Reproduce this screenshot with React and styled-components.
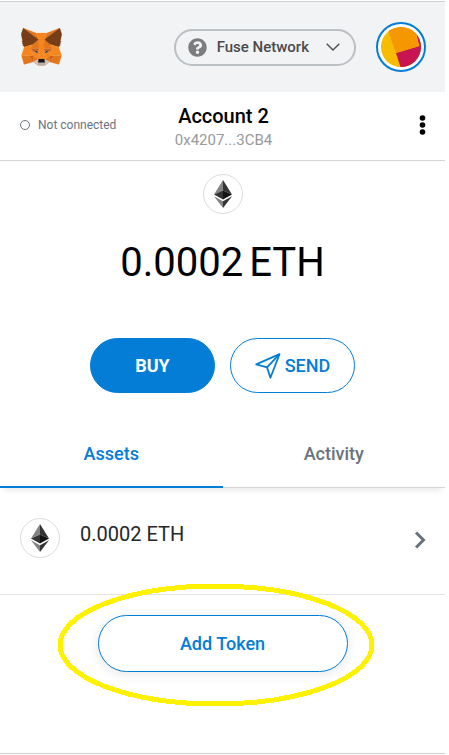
import React from "react";
import styled, { createGlobalStyle, css } from "styled-components";

const GlobalStyle = createGlobalStyle`
  *, *::before, *::after { box-sizing: border-box; }
  body { margin: 0; background: #fff; font-family: Roboto, "Liberation Sans", sans-serif; color: #000; }
  button { font-family: inherit; margin: 0; padding: 0; border: 0; background: none; cursor: pointer; }
  h1, p, ul { margin: 0; padding: 0; }
  svg { display: block; flex: none; }
`;

const Popup = styled.div`
  display: flex;
  flex-direction: column;
  min-height: calc(100vh - 1px);
  margin-right: 4px;
  border-bottom: 1px solid #cdcdcd;
`;

const Header = styled.header`
  display: flex;
  align-items: center;
  gap: 20px;
  padding: 20px 19px 20px 21px;
  background: #f2f3f4;
  border-top: 1px solid #cfd0d1;
  margin-top: 1px;
`;

const NetworkButton = styled.button`
  display: flex;
  align-items: center;
  gap: 10px;
  height: 37px;
  margin-left: auto;
  padding: 0 14px 0 12px;
  border: 2px solid #bbc0c5;
  border-radius: 19px;
  color: #4a4a4c;
  font-size: 15px;
  line-height: 20px;
  font-weight: 500;
`;

const NetworkName = styled.span`
  margin-right: 7px;
`;

const AvatarButton = styled.button`
  display: grid;
  place-items: center;
  width: 50px;
  height: 50px;
  border: 2px solid #037dd6;
  border-radius: 50%;
  background: #fff;
`;

const AccountBar = styled.section`
  display: grid;
  grid-template-columns: 1fr auto 1fr;
  align-items: center;
  padding: 0 18px 2px 20px;
  border-bottom: 1px solid #d2d5d8;
`;

const Connection = styled.button`
  display: flex;
  align-items: center;
  justify-self: start;
  gap: 8px;
  color: #6a737d;
  font-size: 12px;
  line-height: 16px;
`;

const StatusRing = styled.span`
  width: 10px;
  height: 10px;
  border: 1px solid #6a737d;
  border-radius: 50%;
`;

const Account = styled.button`
  display: flex;
  flex-direction: column;
  align-items: center;
  padding: 12px 0 6px;
  color: #000;
`;

const AccountName = styled.span`
  font-size: 20px;
  line-height: 24px;
  font-weight: 500;
`;

const AccountAddress = styled.span`
  color: #989a9b;
  font-size: 15px;
  line-height: 24px;
`;

const MenuButton = styled.button`
  justify-self: end;
  padding: 0 1px;
`;

const Overview = styled.section`
  display: flex;
  flex-direction: column;
  align-items: center;
  padding-top: 13px;
`;

const TokenCircle = styled.span`
  display: grid;
  place-items: center;
  flex: none;
  width: 40px;
  height: 40px;
  border: 1px solid #dcdcdc;
  border-radius: 50%;
  background: #fff;
`;

const Balance = styled.h1`
  display: flex;
  gap: 6px;
  margin-top: 25px;
  font-size: 40px;
  line-height: 48px;
  font-weight: 400;
`;

const Actions = styled.div`
  display: flex;
  gap: 15px;
  margin-top: 51px;
`;

const ActionButton = styled.button`
  display: flex;
  align-items: center;
  justify-content: center;
  gap: 4px;
  width: 125px;
  height: 55px;
  border: 1px solid #037dd6;
  border-radius: 28px;
  font-size: 18px;
  line-height: 24px;
  font-weight: ${(p) => (p.$filled ? 700 : 500)};
  color: ${(p) => (p.$filled ? "#fff" : "#037dd6")};
  background: ${(p) => (p.$filled ? "#037dd6" : "#fff")};
`;

const Tabs = styled.div`
  display: flex;
  margin-top: 28px;
  border-bottom: 1px solid #d2d5d8;
  box-shadow: 0 6px 6px -4px rgba(0, 0, 0, 0.1);
`;

const Tab = styled.button`
  flex: 1;
  padding: 21px 0 20px;
  margin-bottom: -1px;
  border-bottom: 2px solid transparent;
  color: #6a737d;
  font-size: 18px;
  line-height: 24px;
  font-weight: 500;
  ${(p) =>
    p.$active &&
    css`
      color: #037dd6;
      border-bottom-color: #037dd6;
    `}
`;

const AssetList = styled.ul`
  list-style: none;
`;

const AssetRow = styled.button`
  display: flex;
  align-items: center;
  width: 100%;
  gap: 20px;
  padding: 30px 19px 36px 20px;
  border-bottom: 1px solid #e2e4e6;
  color: #24272a;
  text-align: left;
`;

const AssetAmount = styled.span`
  flex: 1;
  padding-bottom: 8px;
  font-size: 20px;
  line-height: 24px;
`;

const AddTokenArea = styled.div`
  display: flex;
  justify-content: center;
  padding: 20px 0;
`;

const Highlighted = styled.div`
  position: relative;
`;

const HighlightRing = styled.svg`
  position: absolute;
  top: -32px;
  left: -41px;
  pointer-events: none;
`;

const AddTokenButton = styled.button`
  width: 250px;
  height: 57px;
  border: 1px solid #037dd6;
  border-radius: 29px;
  background: #fff;
  box-shadow: 0 2px 12px rgba(0, 0, 0, 0.1);
  color: #037dd6;
  font-size: 18px;
  line-height: 24px;
  font-weight: 500;
`;

const foxFacets = [
  ["#e2761b", "274.1,35.5 174.6,109.4 193,65.8"],
  ["#e4761b", "44.4,35.5 143.1,110.1 125.6,65.8"],
  ["#e4761b", "238.3,206.8 211.8,247.4 268.5,263 284.8,207.7"],
  ["#e4761b", "33.9,207.7 50.1,263 106.8,247.4 80.3,206.8"],
  ["#e4761b", "103.6,138.2 87.8,162.1 144.1,164.6 142.1,104.1"],
  ["#e4761b", "214.9,138.2 175.9,103.4 174.6,164.6 230.8,162.1"],
  ["#e4761b", "106.8,247.4 140.6,230.9 111.4,208.1"],
  ["#e4761b", "177.9,230.9 211.8,247.4 207.1,208.1"],
  ["#d7c1b3", "211.8,247.4 177.9,230.9 180.6,253 180.3,262.3"],
  ["#d7c1b3", "106.8,247.4 138.3,262.3 138.1,253 140.6,230.9"],
  ["#233447", "138.8,193.5 110.6,185.2 130.5,176.1"],
  ["#233447", "179.7,193.5 188,176.1 208,185.2"],
  ["#cd6116", "106.8,247.4 111.6,206.8 80.3,207.7"],
  ["#cd6116", "207,206.8 211.8,247.4 238.3,207.7"],
  ["#cd6116", "230.8,162.1 174.6,164.6 179.8,193.5 188.1,176.1 208.1,185.2"],
  ["#cd6116", "110.6,185.2 130.6,176.1 138.8,193.5 144.1,164.6 87.8,162.1"],
  ["#e4751f", "87.8,162.1 111.4,208.1 110.6,185.2"],
  ["#e4751f", "208.1,185.2 207.1,208.1 230.8,162.1"],
  ["#e4751f", "144.1,164.6 138.8,193.5 145.4,227.6 146.9,182.7"],
  ["#e4751f", "174.6,164.6 171.9,182.6 173.1,227.6 179.8,193.5"],
  ["#f6851b", "179.8,193.5 173.1,227.6 177.9,230.9 207.1,208.1 208.1,185.2"],
  ["#f6851b", "110.6,185.2 111.4,208.1 140.6,230.9 145.4,227.6 138.8,193.5"],
  ["#c0ad9e", "180.3,262.3 180.6,253 178.1,250.8 140.4,250.8 138.1,253 138.3,262.3 106.8,247.4 117.8,256.4 140.1,271.9 178.4,271.9 200.8,256.4 211.8,247.4"],
  ["#161616", "177.9,230.9 173.1,227.6 145.4,227.6 140.6,230.9 138.1,253 140.4,250.8 178.1,250.8 180.6,253"],
  ["#763d16", "278.3,114.2 286.8,73.4 274.1,35.5 177.9,106.9 214.9,138.2 267.2,153.5 278.8,140 273.8,136.4 281.8,129.1 275.6,124.3 283.6,118.2"],
  ["#763d16", "31.8,73.4 40.3,114.2 34.9,118.2 42.9,124.3 36.8,129.1 44.8,136.4 39.8,140 51.3,153.5 103.6,138.2 140.6,106.9 44.4,35.5"],
  ["#f6851b", "267.2,153.5 214.9,138.2 230.8,162.1 207.1,208.1 238.3,207.7 284.8,207.7"],
  ["#f6851b", "103.6,138.2 51.3,153.5 33.9,207.7 80.3,207.7 111.4,208.1 87.8,162.1"],
  ["#f6851b", "174.6,164.6 177.9,106.9 193.1,65.8 125.6,65.8 140.6,106.9 144.1,164.6 145.3,182.8 145.4,227.6 173.1,227.6 173.3,182.8"],
];

function FoxLogo() {
  return (
    <svg width="41" height="38" viewBox="31 35 257 238" role="img" aria-label="MetaMask">
      {foxFacets.map(([color, points]) => (
        <polygon key={points} points={points} fill={color} stroke={color} strokeLinejoin="round" />
      ))}
    </svg>
  );
}

function QuestionIcon() {
  return (
    <svg width="19" height="19" viewBox="0 0 512 512" aria-hidden="true">
      <path
        fill="#7b7d7f"
        d="M504 256c0 136.997-111.043 248-248 248S8 392.997 8 256C8 119.083 119.043 8 256 8s248 111.083 248 248zM262.655 90c-54.497 0-89.255 22.957-116.549 63.758-3.536 5.286-2.353 12.415 2.715 16.258l34.699 26.31c5.205 3.947 12.621 3.008 16.665-2.122 17.864-22.658 30.113-35.797 57.303-35.797 20.429 0 45.698 13.148 45.698 32.958 0 14.976-12.363 22.667-32.534 33.976C247.128 238.528 216 254.941 216 296v4c0 6.627 5.373 12 12 12h56c6.627 0 12-5.373 12-12v-1.333c0-28.462 83.186-29.647 83.186-106.667 0-58.002-60.165-102-116.531-102zM256 338c-25.365 0-46 20.635-46 46 0 25.364 20.635 46 46 46s46-20.636 46-46c0-25.365-20.635-46-46-46z"
      />
    </svg>
  );
}

function ChevronDown() {
  return (
    <svg width="14" height="8" viewBox="0 0 14 8" aria-hidden="true">
      <path d="M0.7 0.7 7 7 13.3 0.7" fill="none" stroke="#4a4a4c" strokeWidth="1.3" />
    </svg>
  );
}

function AvatarArt() {
  return (
    <svg width="40" height="40" viewBox="0 0 40 40" aria-hidden="true">
      <clipPath id="avatar-disc">
        <circle cx="20" cy="20" r="20" />
      </clipPath>
      <g clipPath="url(#avatar-disc)">
        <rect width="40" height="40" fill="#f5bc00" />
        <polygon points="15,26 40,18.5 40,40 19.5,40" fill="#c81450" />
        <polygon points="34,0 40,0 40,20 38,19" fill="#c81450" />
        <polygon points="5,-2 34,-2 35,7 38.5,19 15,26" fill="#f59700" />
      </g>
    </svg>
  );
}

function EthIcon() {
  return (
    <svg width="18" height="28" viewBox="0 0 18 28" aria-hidden="true">
      <polygon points="9,0 0,14.4 9,10.6" fill="#828384" />
      <polygon points="9,0 18,14.4 9,10.6" fill="#343434" />
      <polygon points="0,14.4 9,10.6 9,19.4" fill="#343434" />
      <polygon points="18,14.4 9,10.6 9,19.4" fill="#141414" />
      <polygon points="0,16.2 9,21.3 9,28" fill="#828384" />
      <polygon points="18,16.2 9,21.3 9,28" fill="#343434" />
    </svg>
  );
}

function SendIcon() {
  return (
    <svg width="26" height="26" viewBox="0 0 26 26" fill="none" stroke="#037dd6" strokeWidth="1.8" strokeLinejoin="round" aria-hidden="true">
      <path d="M24.5 1.2 1.2 11.3 12 14.3 15.4 24.8Z" />
      <path d="M12 14.3 24.5 1.2" />
    </svg>
  );
}

export default function App() {
  return (
    <>
      <GlobalStyle />
      <Popup>
        <Header>
          <FoxLogo />
          <NetworkButton type="button">
            <QuestionIcon />
            <NetworkName>Fuse Network</NetworkName>
            <ChevronDown />
          </NetworkButton>
          <AvatarButton type="button" aria-label="My accounts">
            <AvatarArt />
          </AvatarButton>
        </Header>
        <AccountBar>
          <Connection type="button">
            <StatusRing />
            Not connected
          </Connection>
          <Account type="button">
            <AccountName>Account 2</AccountName>
            <AccountAddress>0x4207...3CB4</AccountAddress>
          </Account>
          <MenuButton type="button" aria-label="Account options">
            <svg width="7" height="20" viewBox="0 0 7 20" aria-hidden="true">
              <circle cx="3.5" cy="3" r="2.8" />
              <circle cx="3.5" cy="10" r="2.8" />
              <circle cx="3.5" cy="17" r="2.8" />
            </svg>
          </MenuButton>
        </AccountBar>
        <main>
          <Overview>
            <TokenCircle>
              <EthIcon />
            </TokenCircle>
            <Balance>
              <span>0.0002</span>
              <span>ETH</span>
            </Balance>
            <Actions>
              <ActionButton type="button" $filled>
                BUY
              </ActionButton>
              <ActionButton type="button">
                <SendIcon />
                SEND
              </ActionButton>
            </Actions>
          </Overview>
          <Tabs role="tablist">
            <Tab type="button" role="tab" aria-selected="true" $active>
              Assets
            </Tab>
            <Tab type="button" role="tab" aria-selected="false">
              Activity
            </Tab>
          </Tabs>
          <AssetList>
            <li>
              <AssetRow type="button">
                <TokenCircle>
                  <EthIcon />
                </TokenCircle>
                <AssetAmount>0.0002 ETH</AssetAmount>
                <svg width="12" height="22" viewBox="0 0 12 22" aria-hidden="true">
                  <path d="M2 5.5 9.5 13 2 20.5" fill="none" stroke="#6a737d" strokeWidth="3" />
                </svg>
              </AssetRow>
            </li>
          </AssetList>
          <AddTokenArea>
            <Highlighted>
              <AddTokenButton type="button">Add Token</AddTokenButton>
              <HighlightRing width="318" height="124" viewBox="0 0 318 124" aria-hidden="true">
                <ellipse cx="159" cy="62" rx="156" ry="59" fill="none" stroke="#fff200" strokeWidth="5" shapeRendering="crispEdges" />
              </HighlightRing>
            </Highlighted>
          </AddTokenArea>
        </main>
      </Popup>
    </>
  );
}
